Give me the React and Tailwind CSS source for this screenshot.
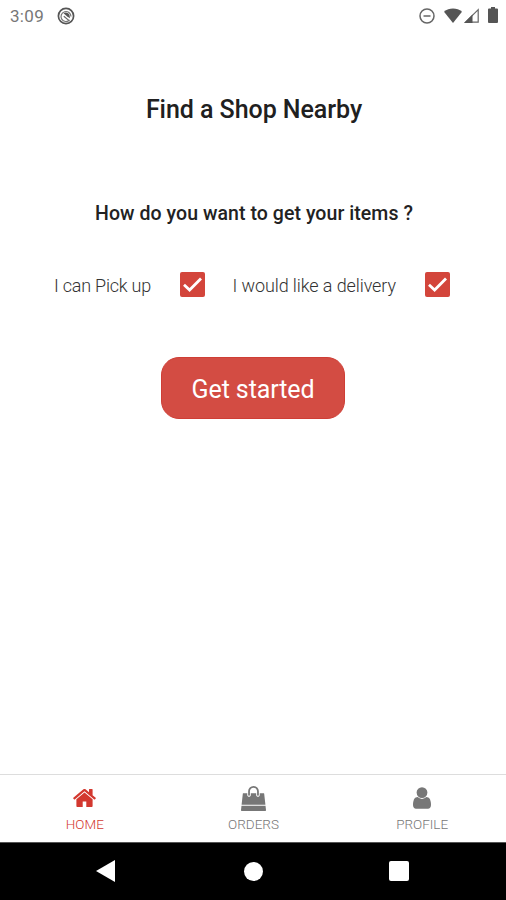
import { useState } from "react";

const HomeIcon = () => (
  <svg viewBox="33 256 1598 1280" className="w-[23px] h-[18px]" fill="currentColor">
    <path d="M1408 992v480q0 26-19 45t-45 19h-384v-384h-256v384h-384q-26 0-45-19t-19-45v-480q0-1 .5-3t.5-3l575-474 575 474q1 2 1 6zm223-69l-62 74q-8 9-21 11h-3q-13 0-21-7l-692-577-692 577q-12 8-24 7-13-2-21-11l-62-74q-8-10-7-23.5t11-21.5l719-599q32-26 76-26t76 26l244 204v-195q0-14 9-23t23-9h192q14 0 23 9t9 23v408l219 182q10 8 11 21.5t-7 23.5z" />
  </svg>
);

const BagIcon = () => (
  <svg viewBox="0 0 1792 1792" className="w-[25px] h-[25px]" fill="currentColor">
    <path d="M1757 1408l35 313q3 28-16 50-19 21-48 21h-1664q-29 0-48-21-19-22-16-50l35-313h1722zm-93-839l86 775h-1708l86-775q3-24 21-40.5t43-16.5h256v128q0 53 37.5 90.5t90.5 37.5 90.5-37.5 37.5-90.5v-128h384v128q0 53 37.5 90.5t90.5 37.5 90.5-37.5 37.5-90.5v-128h256q25 0 43 16.5t21 40.5zm-384-185v256q0 26-19 45t-45 19-45-19-19-45v-256q0-106-75-181t-181-75-181 75-75 181v256q0 26-19 45t-45 19-45-19-19-45v-256q0-159 112.5-271.5t271.5-112.5 271.5 112.5 112.5 271.5z" />
  </svg>
);

const UserIcon = () => (
  <svg viewBox="0 128 1280 1536" className="w-[18px] h-[22px]" fill="currentColor">
    <path d="M1280 1399q0 109-62.5 187t-150.5 78h-854q-88 0-150.5-78t-62.5-187q0-85 8.5-160.5t31.5-152 58.5-131 94-89 134.5-34.5q131 128 313 128t313-128q76 0 134.5 34.5t94 89 58.5 131 31.5 152 8.5 160.5zm-256-887q0 159-112.5 271.5t-271.5 112.5-271.5-112.5-112.5-271.5 112.5-271.5 271.5-112.5 271.5 112.5 112.5 271.5z" />
  </svg>
);

const tabs = [
  { label: "HOME", Icon: HomeIcon },
  { label: "ORDERS", Icon: BagIcon },
  { label: "PROFILE", Icon: UserIcon },
];

const StatusBar = () => (
  <div className="h-8 flex items-center pl-[10px] pr-[8px] text-[#666]">
    <span className="w-[33px] text-[17px] leading-8 tracking-[0.3px] text-[#777]">3:09</span>
    <svg viewBox="0 0 18 18" className="w-[18px] h-[18px] ml-[14px] -mt-[1px]">
      <circle cx="9" cy="9" r="7.6" fill="none" stroke="#555" strokeWidth="1.7" />
      <path d="M12.6 13A5 5 0 1 1 14 9.4" fill="none" stroke="#777" strokeWidth="1.2" />
      <path d="M6.5 6.2C8.6 4.8 11.6 5.5 12.5 8L13 11.2 10.2 9.6z" fill="#555" />
      <path d="M6.8 9.2L11.8 13.4" stroke="#666" strokeWidth="1.2" />
    </svg>
    <div className="ml-auto flex items-center">
      <svg viewBox="0 0 16 16" className="w-4 h-4 -mt-[1px]" fill="none" stroke="#666" strokeWidth="1.5">
        <circle cx="8" cy="8" r="7" />
        <path d="M4.5 8h7" />
      </svg>
      <svg viewBox="0 0 18 15" className="w-[18px] h-[15px] ml-[9px] -mt-[2px]">
        <path d="M0 3.7C5 -.7 13 -.7 18 3.7L9 15z" fill="#555" />
      </svg>
      <svg viewBox="0 0 15 15" className="w-[15px] h-[15px] ml-[2px] mr-[1px] -mt-[2px]">
        <path d="M1.6 14.2L14.2 1.6V14.2z" fill="none" stroke="#666" strokeWidth="1.2" />
        <path d="M0 15L8.5 6.5V15z" fill="#555" />
      </svg>
      <svg viewBox="0 0 10 16" className="w-[10px] h-4 ml-[8px] -mt-[2px]">
        <path d="M3 0h4v1.6h2q1 0 1 1V15q0 1-1 1H1q-1 0-1-1V2.6q0-1 1-1h2z" fill="#555" />
      </svg>
    </div>
  </div>
);

const Checkbox = ({ checked, onClick, label }) => (
  <button
    role="checkbox"
    aria-checked={checked}
    aria-label={label}
    onClick={onClick}
    className="w-[25px] h-[25px] rounded-[2px] bg-[#d3453b] shrink-0"
  >
    {checked && (
      <svg viewBox="0 0 25 25" className="w-[25px] h-[25px]">
        <path d="M4 12.8L9.6 18L21 6.5" fill="none" stroke="#fff" strokeWidth="2.8" />
      </svg>
    )}
  </button>
);

const App = () => {
  const [pickup, setPickup] = useState(true);
  const [delivery, setDelivery] = useState(true);
  const [active, setActive] = useState("HOME");

  return (
    <div className="w-[506px] h-[900px] flex flex-col bg-white font-['Roboto',sans-serif] overflow-hidden">
      <StatusBar />

      <main className="flex-1 flex flex-col items-center">
        <h1 className="mt-[62px] pl-[2px] text-[25px] leading-8 font-medium tracking-[-0.05px] text-[#202020] whitespace-nowrap">
          Find a Shop Nearby
        </h1>
        <h2 className="mt-[76px] pl-[2px] text-[19.5px] leading-6 font-medium tracking-[0.06px] text-[#222] whitespace-nowrap">
          How do you want to get your items ?
        </h2>

        <div className="mt-[46px] h-[25px] w-full flex items-center pl-[54px] text-[18px] leading-[25px] font-light text-[#333] whitespace-nowrap">
          <span className="w-[125.5px] pt-[2px] tracking-[-0.22px]">I can Pick up</span>
          <Checkbox checked={pickup} onClick={() => setPickup(!pickup)} label="Pick up" />
          <span className="ml-[28px] w-[192.5px] pt-[2px] tracking-[-0.1px]">I would like a delivery</span>
          <Checkbox checked={delivery} onClick={() => setDelivery(!delivery)} label="Delivery" />
        </div>

        <button className="mt-[60px] w-[184.5px] h-[62px] pt-[3px] rounded-[18px] bg-[#d34c43] border border-[#cf3e35] text-[25px] leading-8 tracking-[-0.1px] text-white whitespace-nowrap">
          Get started
        </button>
      </main>

      <nav className="h-[68px] grid grid-cols-3 border-t border-[#ddd] text-[#777]">
        {tabs.map(({ label, Icon }) => (
          <button
            key={label}
            onClick={() => setActive(label)}
            className={`flex flex-col items-center pt-[10px] pl-[1px] ${active === label ? "text-[#d3382f]" : ""}`}
          >
            <span className="h-[26px] flex items-center">
              <Icon />
            </span>
            <span className="mt-[3px] text-[13.5px] leading-5 font-light">{label}</span>
          </button>
        ))}
      </nav>

      <div className="h-[58px] pb-[1px] bg-black flex items-center pl-[96px] border-t border-[#555]">
        <svg viewBox="0 0 19 22" className="w-[19px] h-[22px]" fill="#fff">
          <path d="M0 11L19 0V22z" />
        </svg>
        <span className="ml-[129px] w-[19px] h-[19px] rounded-full bg-white" />
        <span className="ml-[126px] w-5 h-5 rounded-[2px] bg-white" />
      </div>
    </div>
  );
};

export default App;
